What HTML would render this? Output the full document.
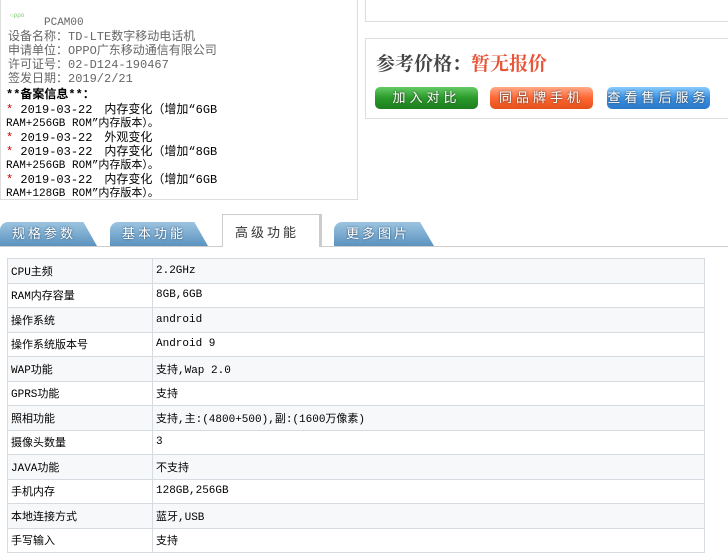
<!DOCTYPE html>
<html><head><meta charset="utf-8"><style>
*{margin:0;padding:0;box-sizing:border-box}
body{width:728px;height:552px;overflow:hidden;background:#fff;font-family:"Liberation Mono","Noto Sans CJK SC",monospace;position:relative;color:#000}
.a{position:absolute}
.l{font-size:12px;line-height:14px;white-space:nowrap}
.g{color:#666}
.r{color:#c00}
.tab{position:absolute;top:222px;height:24px;background:linear-gradient(#9cc4e0,#5b93bf);border-radius:8px 0 0 0;clip-path:polygon(0 0,86% 0,100% 100%,0 100%);color:#fff;font-size:13px;line-height:24px;padding-left:12px;letter-spacing:3px;font-family:"Liberation Sans","Noto Sans CJK SC",sans-serif;text-shadow:0 0 2px #246}
.btn{position:absolute;top:87px;height:22px;width:103px;border-radius:5px;color:#fff;font-size:13px;line-height:22px;text-align:center;letter-spacing:4px;font-family:"Liberation Sans","Noto Sans CJK SC",sans-serif;text-shadow:0 0 2px #333}
table{position:absolute;left:7px;top:258px;width:698px;border-collapse:collapse;font-size:11px}
td{border:1px solid #d6dbe1;height:24.5px;padding:0 3px;white-space:nowrap}
td:first-child{width:145px}
tr:nth-child(odd) td{background:#f7f8fa}
</style></head><body>
<div class="a" style="left:0;top:0;width:358px;height:200px;border:1px solid #ddd;border-top:none"></div>
<div class="a" style="left:10px;top:13px;width:30px;height:6px;color:#7c6;font-size:6px;line-height:6px">○ρρο</div>
<div class="a l g" style="left:44px;top:16px;font-size:11px">PCAM00</div>
<div class="a l g" style="left:8px;top:30px">设备名称：TD-LTE数字移动电话机</div>
<div class="a l g" style="left:8px;top:44px">申请单位：OPPO广东移动通信有限公司</div>
<div class="a l g" style="left:8px;top:58px">许可证号：02-D124-190467</div>
<div class="a l g" style="left:8px;top:72px">签发日期：2019/2/21</div>
<div class="a l" style="left:6px;top:88px;font-weight:bold">**备案信息**：</div>
<div class="a l" style="left:6px;top:103px"><span class="r">*</span> 2019-03-22　内存变化（增加“6GB</div>
<div class="a l" style="left:6px;top:117px;font-size:11px">RAM+256GB ROM”内存版本）。</div>
<div class="a l" style="left:6px;top:131px"><span class="r">*</span> 2019-03-22　外观变化</div>
<div class="a l" style="left:6px;top:145px"><span class="r">*</span> 2019-03-22　内存变化（增加“8GB</div>
<div class="a l" style="left:6px;top:159px;font-size:11px">RAM+256GB ROM”内存版本）。</div>
<div class="a l" style="left:6px;top:173px"><span class="r">*</span> 2019-03-22　内存变化（增加“6GB</div>
<div class="a l" style="left:6px;top:187px;font-size:11px">RAM+128GB ROM”内存版本）。</div>

<div class="a" style="left:365px;top:-1px;width:370px;height:23px;border:1px solid #ddd"></div>
<div class="a" style="left:365px;top:38px;width:370px;height:81px;border:1px solid #ddd"></div>
<div class="a" style="left:376px;top:53px;font-size:19px;line-height:24px;font-weight:bold;font-family:'Liberation Serif','Noto Serif CJK SC',serif;color:#444">参考价格：<span style="color:#e8563a">暂无报价</span></div>
<div class="btn" style="left:375px;background:linear-gradient(#6c6,#2a9a2a 50%,#1d7d1d)">加入对比</div>
<div class="btn" style="left:490px;background:linear-gradient(#fa8,#f63 50%,#e4501a)">同品牌手机</div>
<div class="btn" style="left:607px;background:linear-gradient(#8cf,#3a8fe0 50%,#2a78c8)">查看售后服务</div>

<div class="a" style="left:0;top:246px;width:728px;height:1px;background:#ccc"></div>
<div class="tab" style="left:0;width:97px">规格参数</div>
<div class="tab" style="left:110px;width:98px">基本功能</div>
<div class="a" style="left:222px;top:214px;width:100px;height:33px;background:#fff;border:1px solid #ccc;border-bottom:none;border-right:3px solid #ccc;font-size:13px;line-height:36px;padding-left:12px;letter-spacing:3px;color:#333;font-family:'Liberation Sans','Noto Sans CJK SC',sans-serif">高级功能</div>
<div class="tab" style="left:334px;width:100px">更多图片</div>

<table>
<tr><td>CPU主频</td><td>2.2GHz</td></tr>
<tr><td>RAM内存容量</td><td>8GB,6GB</td></tr>
<tr><td>操作系统</td><td>android</td></tr>
<tr><td>操作系统版本号</td><td>Android 9</td></tr>
<tr><td>WAP功能</td><td>支持,Wap 2.0</td></tr>
<tr><td>GPRS功能</td><td>支持</td></tr>
<tr><td>照相功能</td><td>支持,主:(4800+500),副:(1600万像素)</td></tr>
<tr><td>摄像头数量</td><td>3</td></tr>
<tr><td>JAVA功能</td><td>不支持</td></tr>
<tr><td>手机内存</td><td>128GB,256GB</td></tr>
<tr><td>本地连接方式</td><td>蓝牙,USB</td></tr>
<tr><td>手写输入</td><td>支持</td></tr>
</table>
</body></html>
